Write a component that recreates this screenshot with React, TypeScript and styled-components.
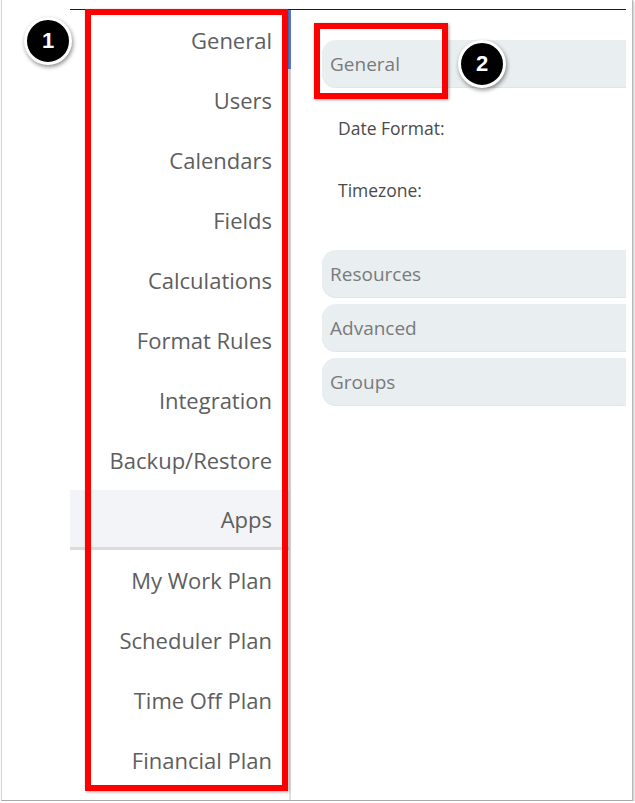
import React from "react";
import styled, { createGlobalStyle } from "styled-components";

const Global = createGlobalStyle`
  html, body { margin: 0; padding: 0; background: #ffffff; }
  body { font-family: "Open Sans", "Noto Sans", sans-serif; }
  * { box-sizing: border-box; }
`;

const Frame = styled.div`
  position: relative;
  margin-left: 1px;
  width: 632px;
  height: 801px;
  background: #ffffff;
  border-left: 1px solid #d4d4d4;
  border-right: 1px solid #b8b8b8;
  border-bottom: 1px solid #a8a8a8;
  box-shadow: 1px 1px 2px rgba(0, 0, 0, 0.25);
  padding: 9px 0 0 68px;
  overflow: hidden;
`;

const AppShell = styled.div`
  width: 556px;
  height: 792px;
  border-top: 1px solid #1e1e1e;
  display: grid;
  grid-template-columns: 221px 1fr;
  overflow: hidden;
`;

const Sidebar = styled.nav`
  display: flex;
  flex-direction: column;
  border-right: 2px solid #e0e0e0;
`;

const NavItem = styled.div<{ $active?: boolean; $selected?: boolean }>`
  position: relative;
  height: 60px;
  flex: 0 0 60px;
  display: flex;
  align-items: center;
  justify-content: flex-end;
  padding: 0 17px 0 0;
  font-size: 22px;
  color: #5e5e5e;
  background: ${(p) => (p.$selected ? "#f3f4f7" : "transparent")};
  border-bottom: ${(p) => (p.$selected ? "3px solid #dcdcdc" : "none")};
  &::after {
    content: "";
    display: ${(p) => (p.$active ? "block" : "none")};
    position: absolute;
    right: -2px;
    top: 0;
    bottom: 1px;
    width: 4px;
    background: #5b80d6;
  }
`;

const Content = styled.main`
  padding: 30px 0 0 31px;
  display: flex;
  flex-direction: column;
  gap: 7px;
`;

const Section = styled.section`
  display: flex;
  flex-direction: column;
`;

const SectionHeader = styled.div`
  height: 47px;
  display: flex;
  align-items: center;
  padding: 1px 0 0 8px;
  font-size: 19px;
  color: #7a7a7a;
  background: #e9eef1;
  border-radius: 14px 0 0 14px;
  box-shadow: 0 1px 0 #dfe5e8;
`;

const FieldList = styled.div`
  display: flex;
  flex-direction: column;
  padding: 10px 0 22px 16px;
`;

const FieldRow = styled.div`
  height: 62px;
  display: flex;
  align-items: center;
  font-size: 17.5px;
  color: #4a4a4a;
`;

const Callout = styled.div<{ $x: number; $y: number; $w: number; $h: number }>`
  position: absolute;
  left: ${(p) => p.$x}px;
  top: ${(p) => p.$y}px;
  width: ${(p) => p.$w}px;
  height: ${(p) => p.$h}px;
  border: 6px solid #ff0000;
  box-shadow: 1px 1px 3px rgba(0, 0, 0, 0.35);
  pointer-events: none;
`;

const Badge = styled.div<{ $x: number; $y: number }>`
  position: absolute;
  left: ${(p) => p.$x - 24}px;
  top: ${(p) => p.$y - 24}px;
  width: 48px;
  height: 48px;
  border-radius: 50%;
  background: #000000;
  border: 3px solid #ffffff;
  box-shadow: 1px 2px 4px rgba(0, 0, 0, 0.45);
  display: flex;
  align-items: center;
  justify-content: center;
  color: #ffffff;
  font-family: "Liberation Sans", Arial, sans-serif;
  font-weight: 700;
  font-size: 22px;
`;

const navItems = [
  "General",
  "Users",
  "Calendars",
  "Fields",
  "Calculations",
  "Format Rules",
  "Integration",
  "Backup/Restore",
  "Apps",
  "My Work Plan",
  "Scheduler Plan",
  "Time Off Plan",
  "Financial Plan",
];

export default function App() {
  return (
    <>
      <Global />
      <Frame>
        <AppShell>
          <Sidebar>
            {navItems.map((item) => (
              <NavItem key={item} $active={item === "General"} $selected={item === "Apps"}>
                {item}
              </NavItem>
            ))}
          </Sidebar>
          <Content>
            <Section>
              <SectionHeader>General</SectionHeader>
              <FieldList>
                <FieldRow>Date Format:</FieldRow>
                <FieldRow>Timezone:</FieldRow>
              </FieldList>
            </Section>
            <SectionHeader>Resources</SectionHeader>
            <SectionHeader>Advanced</SectionHeader>
            <SectionHeader>Groups</SectionHeader>
          </Content>
        </AppShell>
        <Callout $x={83} $y={9} $w={203} $h={782} />
        <Callout $x={312} $y={23} $w={134} $h={76} />
        <Badge $x={46} $y={41}>1</Badge>
        <Badge $x={480} $y={64}>2</Badge>
      </Frame>
    </>
  );
}
